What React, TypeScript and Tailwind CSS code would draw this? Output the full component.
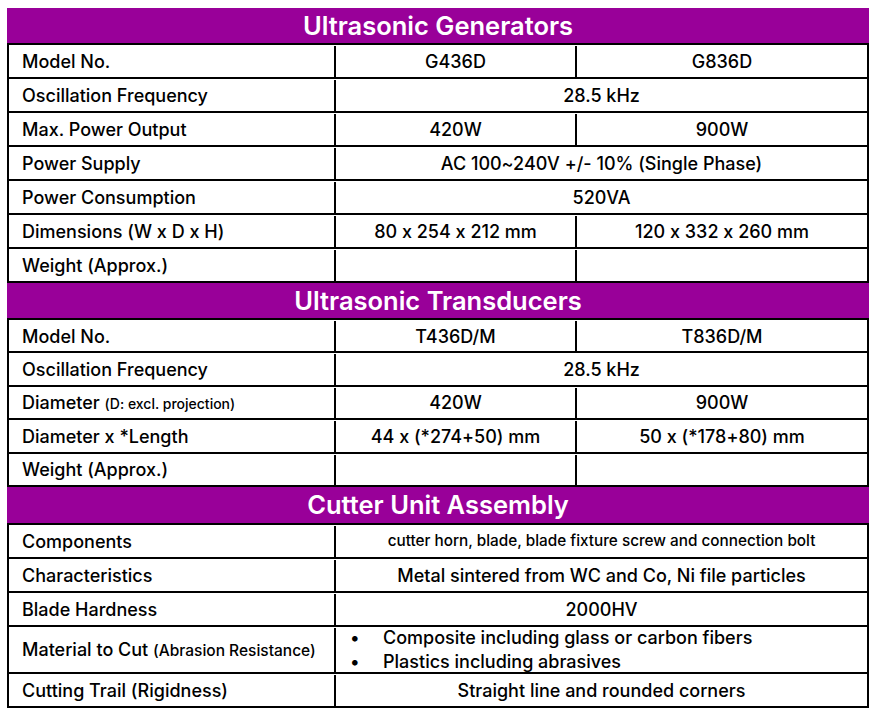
import React from 'react';

type Row = {
  label: React.ReactNode;
  cells: React.ReactNode[];
  tall?: boolean;
};

const Section = ({ title, rows, rowH, headH }: { title: string; rows: Row[]; rowH: string; headH: string }) => {
  return (
    <div>
      <div className={`${headH} bg-[#990099] flex items-center justify-center`}>
        <h2 className="text-white text-[25.5px] font-semibold leading-none">{title}</h2>
      </div>
      <div className="border-x-2 border-b-2 border-black">
        {rows.map((row, i) => (
          <div key={i} className={`flex border-t-2 border-black pt-[1px] ${row.tall ? 'h-[47px]' : rowH}`}>
            <div className="w-[327px] shrink-0 border-r-2 border-black flex items-center pl-[13px]">
              {row.label}
            </div>
            {row.cells.length === 2 ? (
              <>
                <div className="w-[241px] shrink-0 border-r-2 border-black flex items-center justify-center">
                  {row.cells[0]}
                </div>
                <div className="flex-1 flex items-center justify-center">{row.cells[1]}</div>
              </>
            ) : (
              <div className="flex-1 flex items-center justify-center">{row.cells[0]}</div>
            )}
          </div>
        ))}
      </div>
    </div>
  );
};

const generators: Row[] = [
  { label: 'Model No.', cells: ['G436D', 'G836D'] },
  { label: 'Oscillation Frequency', cells: ['28.5 kHz'] },
  { label: 'Max. Power Output', cells: ['420W', '900W'] },
  { label: 'Power Supply', cells: ['AC 100~240V +/- 10% (Single Phase)'] },
  { label: 'Power Consumption', cells: ['520VA'] },
  { label: 'Dimensions (W x D x H)', cells: ['80 x 254 x 212 mm', '120 x 332 x 260 mm'] },
  { label: 'Weight (Approx.)', cells: ['', ''] },
];

const transducers: Row[] = [
  { label: 'Model No.', cells: ['T436D/M', 'T836D/M'] },
  { label: 'Oscillation Frequency', cells: ['28.5 kHz'] },
  {
    label: (
      <span>
        Diameter <span className="text-[14px]">(D: excl. projection)</span>
      </span>
    ),
    cells: ['420W', '900W'],
  },
  { label: 'Diameter x *Length', cells: ['44 x (*274+50) mm', '50 x (*178+80) mm'] },
  { label: 'Weight (Approx.)', cells: ['', ''] },
];

const cutter: Row[] = [
  {
    label: 'Components',
    cells: [<span className="text-[15.3px]">cutter horn, blade, blade fixture screw and connection bolt</span>],
  },
  { label: 'Characteristics', cells: ['Metal sintered from WC and Co, Ni file particles'] },
  { label: 'Blade Hardness', cells: ['2000HV'] },
  {
    label: (
      <span className="whitespace-nowrap">
        Material to Cut <span className="text-[15.5px]">(Abrasion Resistance)</span>
      </span>
    ),
    cells: [
      <ul className="w-full pl-[14px] leading-[24px]">
        <li className="flex">
          <span className="w-[33px]">•</span>Composite including glass or carbon fibers
        </li>
        <li className="flex">
          <span className="w-[33px]">•</span>Plastics including abrasives
        </li>
      </ul>,
    ],
    tall: true,
  },
  { label: 'Cutting Trail (Rigidness)', cells: ['Straight line and rounded corners'] },
];

export default function App() {
  return (
    <div
      className="w-[875px] h-[714px] bg-white pt-[8px] pl-[7px] text-black text-[18px] font-medium [font-variant-ligatures:no-contextual]"
      style={{ fontFamily: 'Inter, sans-serif' }}
    >
      <div className="w-[862px]">
        <Section title="Ultrasonic Generators" rows={generators} rowH="h-[34px]" headH="h-[35px]" />
        <Section title="Ultrasonic Transducers" rows={transducers} rowH="h-[33.4px]" headH="h-[35px]" />
        <Section title="Cutter Unit Assembly" rows={cutter} rowH="h-[34px]" headH="h-[36px]" />
      </div>
    </div>
  );
}
